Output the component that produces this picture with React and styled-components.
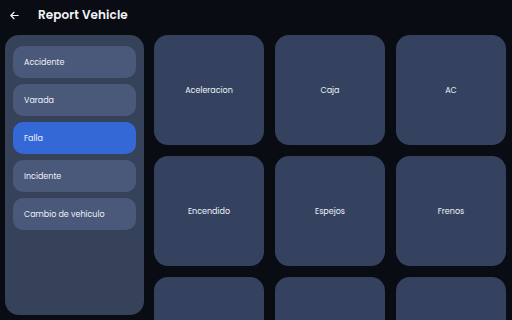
import React from "react";
import styled, { createGlobalStyle } from "styled-components";

const Global = createGlobalStyle`
  html, body { margin: 0; padding: 0; background: #090c13; }
  body { font-family: "Poppins", "Inter", "Noto Sans", sans-serif; color: #eef1f7; }
  * { box-sizing: border-box; }
`;

const Page = styled.div`
  width: 512px;
  height: 320px;
  overflow: hidden;
  background: #090c13;
  display: flex;
  flex-direction: column;
`;

const Header = styled.header`
  height: 30px;
  display: flex;
  align-items: center;
  padding-left: 9px;
  gap: 18px;
`;

const Title = styled.h1`
  margin: 0;
  font-size: 12px;
  font-weight: 600;
  color: #f2f4f8;
  letter-spacing: 0.1px;
`;

const Body = styled.div`
  display: flex;
  gap: 10px;
  padding: 5px 0 0 5px;
  flex: 1;
  min-height: 0;
`;

const Sidebar = styled.nav`
  width: 139px;
  height: 280px;
  background: #364259;
  border-radius: 14px;
  padding: 11px 8px;
  display: flex;
  flex-direction: column;
  gap: 6px;
`;

const Item = styled.div`
  height: 32px;
  border-radius: 10px;
  background: ${(p) => (p.$active ? "#3468d6" : "#4a5879")};
  display: flex;
  align-items: center;
  padding: 2px 0 0 11px;
  font-size: 8px;
  color: #eef1f7;
`;

const Grid = styled.div`
  display: grid;
  grid-template-columns: repeat(3, 110px);
  grid-auto-rows: 110px;
  gap: 11px;
`;

const Tile = styled.div`
  background: #344260;
  border-radius: 14px;
  display: flex;
  align-items: center;
  justify-content: center;
  padding-top: 2px;
  font-size: 8px;
  color: #eef1f7;
`;

const items = ["Accidente", "Varada", "Falla", "Incidente", "Cambio de vehículo"];
const tiles = ["Aceleracion", "Caja", "AC", "Encendido", "Espejos", "Frenos", "", "", ""];

export default function App() {
  return (
    <Page>
      <Global />
      <Header>
        <svg width="11" height="11" viewBox="0 0 24 24" fill="none" stroke="#f2f4f8" strokeWidth="2.6" strokeLinecap="round" strokeLinejoin="round">
          <path d="M20 12H5" />
          <path d="M11 5l-7 7 7 7" />
        </svg>
        <Title>Report Vehicle</Title>
      </Header>
      <Body>
        <Sidebar>
          {items.map((t) => (
            <Item key={t} $active={t === "Falla"}>{t}</Item>
          ))}
        </Sidebar>
        <Grid>
          {tiles.map((t, i) => (
            <Tile key={i}>{t}</Tile>
          ))}
        </Grid>
      </Body>
    </Page>
  );
}
